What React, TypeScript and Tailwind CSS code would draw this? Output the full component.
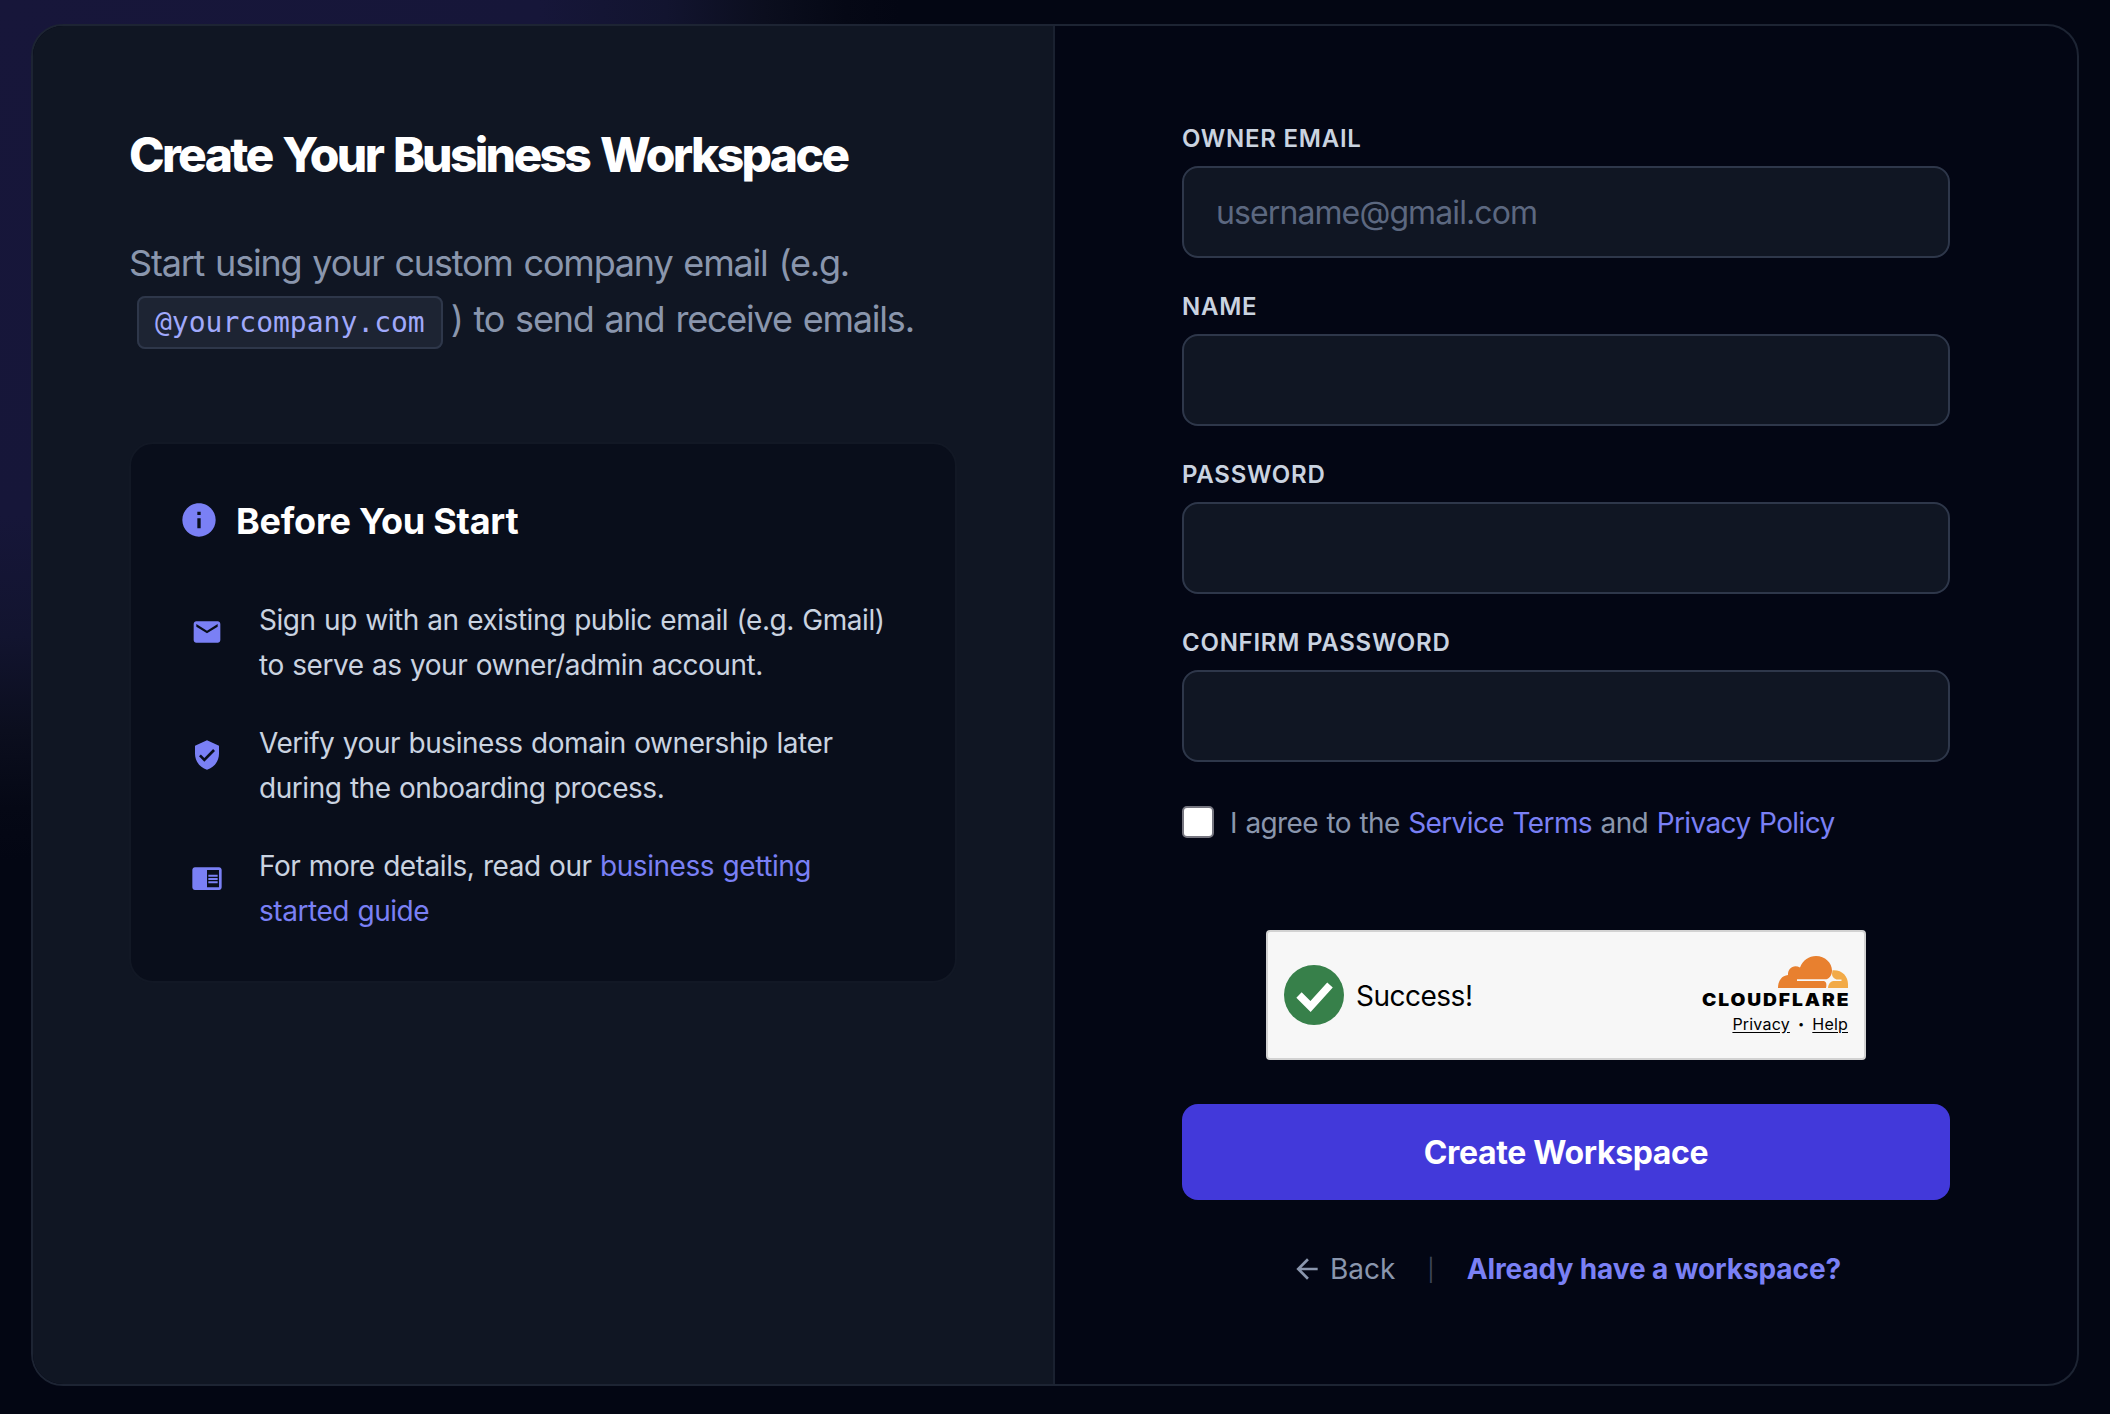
import type { ReactNode } from "react";
import { MdArrowBack, MdChromeReaderMode, MdEmail, MdInfo, MdVerifiedUser } from "react-icons/md";

const fields = [
  { name: "email", label: "Owner Email", type: "email", placeholder: "username@gmail.com" },
  { name: "name", label: "Name", type: "text", placeholder: "" },
  { name: "password", label: "Password", type: "password", placeholder: "" },
  { name: "confirm", label: "Confirm Password", type: "password", placeholder: "" },
];

const Tip = ({ icon, children }: { icon: ReactNode; children: ReactNode }) => (
  <li className="flex h-[123px] items-start gap-9">
    <span className="mt-[18px] text-[32px] text-[#7a80f5]">{icon}</span>
    <p className="text-[28px] leading-[45px] tracking-[-0.45px] [word-spacing:1px] text-[#cad3e0]">{children}</p>
  </li>
);

const Turnstile = () => (
  <div className="mx-auto flex h-[130px] w-[600px] items-center rounded-[4px] border-2 border-[#d2d2d2] bg-[#f7f7f7] px-4 text-black">
    <svg viewBox="0 0 60 60" className="size-[60px]">
      <circle cx="30" cy="30" r="30" fill="#37804a" />
      <path d="M15 30 L26.500 41.500 L46 20" fill="none" stroke="#fff" strokeWidth="7.5" />
    </svg>
    <span className="mt-[2px] ml-3 text-[28px] leading-8 tracking-[-0.5px]">Success!</span>
    <div className="ml-auto flex flex-col items-end">
      <svg viewBox="0 0 70 32" className="h-8 w-[70px]">
        <path
          d="M0 32 C0 24.500 4 19.500 10 19 C9.500 12 16 8 22 11.500 C25 4 31 0 38 0 C47 0 54 7 54 14.500 C54 18.500 52 22 48.500 23.300 H19 V25 H45 C48 25 49 27.500 48 32 Z"
          fill="#e8802f"
        />
        <path
          d="M54.500 14.200 C64 13.500 70 20 70 28 V32 H50 C50.500 28 52 25.500 55.500 25 H63.500 V23.500 H58.500 C55.500 22.500 54 20.500 54 18 Z"
          fill="#f2aa47"
        />
      </svg>
      <div className="mt-[3px] -mr-[2px] origin-right scale-x-[1.13] text-[17px] leading-[18px] font-black tracking-[1.7px]">
        CLOUDFLARE
      </div>
      <div className="mt-[5px] flex items-center gap-2 text-[16px] leading-5 tracking-[0.2px]">
        <a className="underline underline-offset-2">Privacy</a>
        <span className="text-[11px]">•</span>
        <a className="underline underline-offset-2">Help</a>
      </div>
    </div>
  </div>
);

export default function App() {
  return (
    <div className="h-[1414px] w-[2110px] overflow-hidden bg-[#030613] bg-[radial-gradient(ellipse_900px_860px_at_0_0,#17163a_0%,#161639_60%,#12142f_74%,#0b0e1e_85%,#050815_94%,transparent_100%)] px-[31px] pt-6 font-['Inter',sans-serif]">
      <div className="flex h-[1362px] w-[2048px] overflow-hidden rounded-[32px] border-2 border-[#1d2433] bg-[#030614]">
        <section className="w-[1022px] border-r-2 border-[#1a2130] bg-[#101623] px-[96px] pt-[97px]">
          <h1 className="text-[48px] leading-[64px] font-extrabold tracking-[-2.7px] [word-spacing:3px] text-white">
            Create Your Business Workspace
          </h1>
          <p className="mt-[48px] text-[36px] leading-[56px] tracking-[-1.2px] [word-spacing:2px] text-[#8a96ad]">
            Start using your custom company email (e.g.
            <br />
            <code className="mx-2 rounded-[8px] border-2 border-[#2e374a] bg-[#1d2433] px-4 py-2 font-['DejaVu_Sans_Mono',monospace] text-[28px] tracking-normal text-[#a0a9fb]">
              @yourcompany.com
            </code>
            ) to send and receive emails.
          </p>

          <div className="mt-[91px] h-[541px] w-[828px] rounded-3xl border-2 border-[#121825] bg-[#090e1b] px-[48px] pt-[48px]">
            <div className="flex items-center gap-[17px]">
              <MdInfo className="size-10 text-[#7a80f5]" />
              <h2 className="pt-[2px] text-[36px] leading-[54px] font-bold tracking-[-0.25px] text-white">
                Before You Start
              </h2>
            </div>
            <ul className="mt-[50px] pl-[12px]">
              <Tip icon={<MdEmail />}>
                Sign up with an existing public email (e.g. Gmail)
                <br />
                to serve as your owner/admin account.
              </Tip>
              <Tip icon={<MdVerifiedUser />}>
                Verify your business domain ownership later
                <br />
                during the onboarding process.
              </Tip>
              <Tip icon={<MdChromeReaderMode />}>
                For more details, read our <a className="text-[#7a80f5]">business getting</a>
                <br />
                <a className="text-[#7a80f5]">started guide</a>
              </Tip>
            </ul>
          </div>
        </section>

        <form className="flex-1 pr-[127px] pl-[127px] pt-[95px]">
          {fields.map((field) => (
            <div key={field.name} className="h-[168px]">
              <label className="block h-[45px] text-[24px] leading-9 font-semibold tracking-[0.75px] text-[#cad3e0] uppercase">
                {field.label}
              </label>
              <input
                type={field.type}
                placeholder={field.placeholder}
                className="block h-[92px] w-[768px] rounded-2xl border-2 border-[#2e374a] bg-[#101623] px-8 text-[32px] tracking-[-0.9px] text-white placeholder:text-[#5c6880]"
              />
            </div>
          ))}

          <div className="mt-[9px] flex h-[40px] items-center gap-4 text-[28px] tracking-[-0.6px] [word-spacing:1.2px] text-[#8a96ad]">
            <span className="size-8 rounded-[5px] border-2 border-[#767680] bg-white" />
            <span className="pt-[2px]">
              I agree to the <a className="text-[#7a80f5]">Service Terms</a> and{" "}
              <a className="text-[#7a80f5]">Privacy Policy</a>
            </span>
          </div>

          <div className="mt-[88px]">
            <Turnstile />
          </div>

          <button className="mt-[44px] block h-24 w-[768px] rounded-2xl bg-[#4239da] pt-[2px] text-[32px] font-bold tracking-[-0.35px] text-white">
            Create Workspace
          </button>

          <div className="mt-[48px] flex h-[42px] items-center justify-center text-[28px]">
            <MdArrowBack className="size-8 text-[#8a96ad]" />
            <a className="ml-[7px] text-[#8a96ad]">Back</a>
            <span className="mx-[32px] pt-[3px] text-[22px] text-[#3d475a]">|</span>
            <a className="font-bold tracking-[-0.1px] text-[#7a80f5]">Already have a workspace?</a>
          </div>
        </form>
      </div>
    </div>
  );
}
